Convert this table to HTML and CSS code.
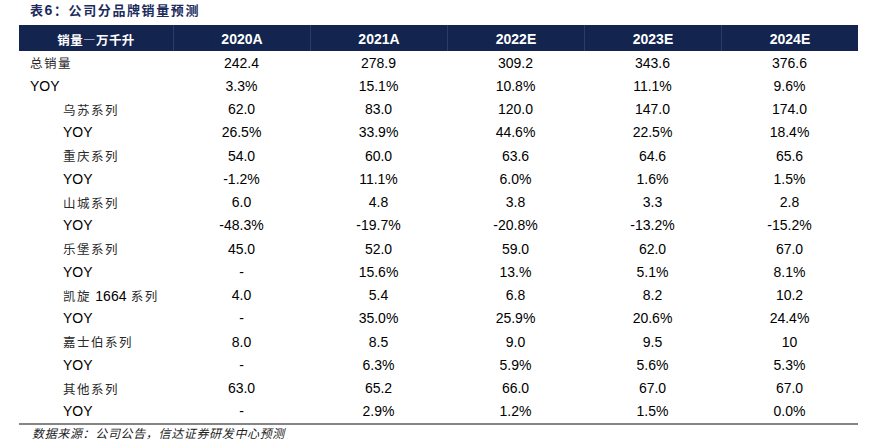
FILE: index.html
```html
<!DOCTYPE html>
<html lang="zh">
<head>
<meta charset="utf-8">
<link rel="stylesheet" href="styles.css">
</head>
<body>
<div class="page">
  <div class="title">表<span class="num">6</span>：公司分品牌销量预测</div>
  <div class="table">
    <div class="hcell first">销量—万千升</div>
    <div class="hcell">2020A</div>
    <div class="hcell">2021A</div>
    <div class="hcell">2022E</div>
    <div class="hcell">2023E</div>
    <div class="hcell last">2024E</div>

    <div class="label l0 zh"><span>总销量</span></div><div class="val">242.4</div><div class="val">278.9</div><div class="val">309.2</div><div class="val">343.6</div><div class="val">376.6</div>
    <div class="label l0">YOY</div><div class="val">3.3%</div><div class="val">15.1%</div><div class="val">10.8%</div><div class="val">11.1%</div><div class="val">9.6%</div>

    <div class="label l1 zh"><span>乌苏系列</span></div><div class="val">62.0</div><div class="val">83.0</div><div class="val">120.0</div><div class="val">147.0</div><div class="val">174.0</div>
    <div class="label l1">YOY</div><div class="val">26.5%</div><div class="val">33.9%</div><div class="val">44.6%</div><div class="val">22.5%</div><div class="val">18.4%</div>

    <div class="label l1 zh"><span>重庆系列</span></div><div class="val">54.0</div><div class="val">60.0</div><div class="val">63.6</div><div class="val">64.6</div><div class="val">65.6</div>
    <div class="label l1">YOY</div><div class="val">-1.2%</div><div class="val">11.1%</div><div class="val">6.0%</div><div class="val">1.6%</div><div class="val">1.5%</div>

    <div class="label l1 zh"><span>山城系列</span></div><div class="val">6.0</div><div class="val">4.8</div><div class="val">3.8</div><div class="val">3.3</div><div class="val">2.8</div>
    <div class="label l1">YOY</div><div class="val">-48.3%</div><div class="val">-19.7%</div><div class="val">-20.8%</div><div class="val">-13.2%</div><div class="val">-15.2%</div>

    <div class="label l1 zh"><span>乐堡系列</span></div><div class="val">45.0</div><div class="val">52.0</div><div class="val">59.0</div><div class="val">62.0</div><div class="val">67.0</div>
    <div class="label l1">YOY</div><div class="val">-</div><div class="val">15.6%</div><div class="val">13.%</div><div class="val">5.1%</div><div class="val">8.1%</div>

    <div class="label l1 zh"><span>凯旋&nbsp;<span class="num">1664</span>&nbsp;系列</span></div><div class="val">4.0</div><div class="val">5.4</div><div class="val">6.8</div><div class="val">8.2</div><div class="val">10.2</div>
    <div class="label l1">YOY</div><div class="val">-</div><div class="val">35.0%</div><div class="val">25.9%</div><div class="val">20.6%</div><div class="val">24.4%</div>

    <div class="label l1 zh"><span>嘉士伯系列</span></div><div class="val">8.0</div><div class="val">8.5</div><div class="val">9.0</div><div class="val">9.5</div><div class="val">10</div>
    <div class="label l1">YOY</div><div class="val">-</div><div class="val">6.3%</div><div class="val">5.9%</div><div class="val">5.6%</div><div class="val">5.3%</div>

    <div class="label l1 zh"><span>其他系列</span></div><div class="val">63.0</div><div class="val">65.2</div><div class="val">66.0</div><div class="val">67.0</div><div class="val">67.0</div>
    <div class="label l1">YOY</div><div class="val">-</div><div class="val">2.9%</div><div class="val">1.2%</div><div class="val">1.5%</div><div class="val">0.0%</div>
  </div>
  <div class="source">数据来源：公司公告，信达证券研发中心预测</div>
</div>
</body>
</html>
```

FILE: styles.css
```css
html, body {
  margin: 0;
  padding: 0;
  background: #ffffff;
}

.page {
  width: 873px;
  height: 444px;
  overflow: hidden;
  font-family: "Liberation Sans", Arial, "Noto Sans CJK SC", sans-serif;
  color: #000;
}

.title {
  height: 25px;
  line-height: 20px;
  padding-left: 30px;
  box-sizing: border-box;
  font-family: "Noto Sans CJK SC", sans-serif;
  font-size: 13px;
  font-weight: 700;
  letter-spacing: 1.6px;
  color: #1c2c5c;
}

.title .num {
  font-family: "Liberation Sans", Arial, sans-serif;
  font-size: 14px;
}

.table {
  margin-left: 19px;
  width: 839px;
  display: grid;
  grid-template-columns: 154px repeat(5, 137px);
  grid-template-rows: 26px;
  grid-auto-rows: 23.25px;
  border-bottom: 2px solid #858585;
}

.hcell {
  background: #13244f;
  color: #ffffff;
  font-weight: 700;
  font-size: 14px;
  display: flex;
  align-items: center;
  justify-content: center;
  padding-top: 2px;
  box-sizing: border-box;
  border-left: 1px solid #2b3c68;
}

.hcell.first {
  border-left: none;
  font-family: "Noto Sans CJK SC", sans-serif;
  font-size: 12.5px;
  letter-spacing: 0.4px;
}

.label {
  display: flex;
  align-items: center;
  font-size: 14px;
  white-space: nowrap;
}

.label.zh {
  font-family: "Noto Sans CJK SC", sans-serif;
  font-size: 12.5px;
  letter-spacing: 1.5px;
  color: #2a2a2a;
}

.label .num {
  font-family: "Liberation Sans", Arial, sans-serif;
  font-size: 14px;
  letter-spacing: 0;
  color: #000;
}

.l0 {
  padding-left: 11px;
}

.l1 {
  padding-left: 44px;
}

.val {
  display: flex;
  align-items: center;
  justify-content: center;
  font-size: 14px;
}

.source {
  padding-left: 32px;
  margin-top: 0;
  font-family: "Noto Sans CJK SC", sans-serif;
  font-size: 12px;
  font-style: italic;
  letter-spacing: 0.65px;
  color: #222;
  line-height: 16px;
}
```
